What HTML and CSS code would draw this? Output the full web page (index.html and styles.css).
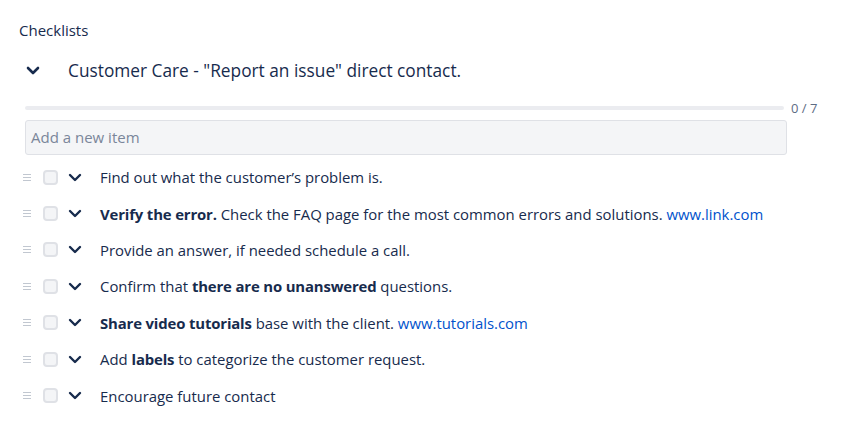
FILE: index.html
```html
<!DOCTYPE html>
<html>
<head>
<meta charset="utf-8">
<link rel="stylesheet" href="styles.css">
</head>
<body>
<div class="page">
  <div class="heading">Checklists</div>
  <div class="title-row">
    <span class="title-chev"><svg width="14" height="9" viewBox="0 0 14 9"><path d="M2 2 L7 7 L12 2" fill="none" stroke="#172b4d" stroke-width="2.6" stroke-linecap="round" stroke-linejoin="round"/></svg></span>
    <span class="title">Customer Care - "Report an issue" direct contact.</span>
  </div>
  <div class="progress-row">
    <div class="bar"></div>
    <span class="count">0 / 7</span>
  </div>
  <div class="input">Add a new item</div>
  <ul class="items">
    <li class="item"><span class="drag"></span><span class="box"></span><span class="chev"></span><span class="text">Find out what the customer’s problem is.</span></li>
    <li class="item"><span class="drag"></span><span class="box"></span><span class="chev"></span><span class="text"><b>Verify the error.</b> Check the FAQ page for the most common errors and solutions. <a>www.link.com</a></span></li>
    <li class="item"><span class="drag"></span><span class="box"></span><span class="chev"></span><span class="text">Provide an answer, if needed schedule a call.</span></li>
    <li class="item"><span class="drag"></span><span class="box"></span><span class="chev"></span><span class="text">Confirm that <b>there are no unanswered</b> questions.</span></li>
    <li class="item"><span class="drag"></span><span class="box"></span><span class="chev"></span><span class="text"><b>Share video tutorials</b> base with the client. <a>www.tutorials.com</a></span></li>
    <li class="item"><span class="drag"></span><span class="box"></span><span class="chev"></span><span class="text">Add <b>labels</b> to categorize the customer request.</span></li>
    <li class="item"><span class="drag"></span><span class="box"></span><span class="chev"></span><span class="text">Encourage future contact</span></li>
  </ul>
</div>
</body>
</html>
```
FILE: styles.css
```css
* { box-sizing: border-box; }
html, body { margin: 0; padding: 0; background: #fff; }
body {
  font-family: "Open Sans", "Noto Sans", sans-serif;
  color: #172b4d;
  font-size: 14px;
}
.page { padding: 20px 0 0 19px; width: 841px; }
.heading { font-size: 15px; line-height: 20px; height: 20px; }
.title-row {
  display: flex; align-items: center; height: 40px; margin-top: 10px;
  padding-left: 7px;
}
.title-chev { width: 14px; height: 9px; display: flex; }
.title { font-size: 17.3px; margin-left: 28px; }
.progress-row {
  display: flex; align-items: center; margin-top: 11px; padding-left: 6px; height: 14px;
}
.bar { width: 759px; height: 4px; background: #ebecf0; border-radius: 2px; }
.count { font-size: 13px; color: #5e6c84; margin-left: 7px; line-height: 14px; }
.input {
  margin: 5px 0 0 6px; width: 762px; height: 35px;
  background: #f4f5f7; border: 1px solid #dfe1e6; border-radius: 3px;
  padding: 0 5px; line-height: 33px; color: #7a869a; font-size: 15px;
}
.items { list-style: none; margin: 4px 0 0 0; padding: 0; }
.item { display: flex; align-items: center; height: 36.4px; }
.drag {
  width: 8px; height: 7px; margin-left: 4px;
  background: linear-gradient(#c1c7d0 0 1px, transparent 1px 3px, #c1c7d0 3px 4px, transparent 4px 6px, #c1c7d0 6px 7px);
}
.box {
  width: 15px; height: 15px; margin-left: 12px;
  background: #f4f5f7; border: 2px solid #dfe1e6; border-radius: 4px;
}
.chev {
  width: 14px; height: 9px; margin-left: 10px;
  background: no-repeat center/14px 9px url("data:image/svg+xml;utf8,<svg xmlns='http://www.w3.org/2000/svg' width='14' height='9' viewBox='0 0 14 9'><path d='M2 2 L7 7 L12 2' fill='none' stroke='%23172b4d' stroke-width='2.4' stroke-linecap='round' stroke-linejoin='round'/></svg>");
}
.text { margin-left: 18px; font-size: 14.9px; line-height: 20px; }
.text b { font-weight: 700; letter-spacing: -0.15px; }
.text a { color: #0052cc; text-decoration: none; }
```
